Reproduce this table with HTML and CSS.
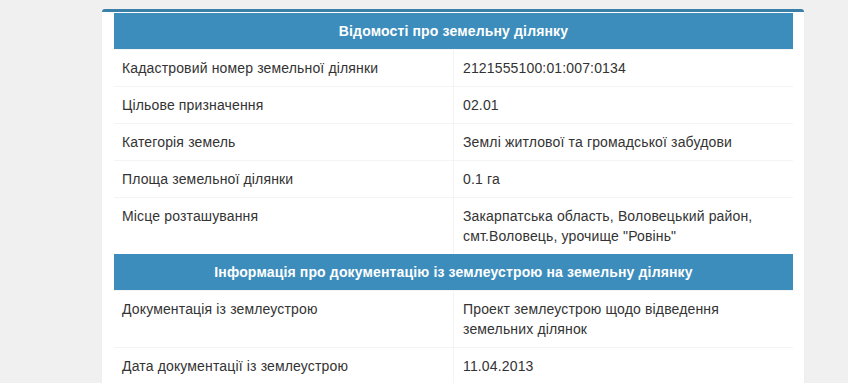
FILE: index.html
```html
<!DOCTYPE html>
<html>
    <head>
        <title>Відомості про земельну ділянку</title>
        <link rel="stylesheet" href="styles.css">
    </head>
    <body>
        <div class="box">
            <table class="info-table">
                <tr>
                    <th colspan="2">Відомості про земельну ділянку</th>
                </tr>
                <tr>
                    <td>Кадастровий номер земельної ділянки</td>
                    <td>2121555100:01:007:0134</td>
                </tr>
                <tr>
                    <td>Цільове призначення</td>
                    <td>02.01</td>
                </tr>
                <tr>
                    <td>Категорія земель</td>
                    <td>Землі житлової та громадської забудови</td>
                </tr>
                <tr>
                    <td>Площа земельної ділянки</td>
                    <td>0.1 га</td>
                </tr>
                <tr>
                    <td>Місце розташування</td>
                    <td>Закарпатська область, Воловецький район, смт.Воловець, урочище "Ровінь"</td>
                </tr>
                <tr>
                    <th colspan="2">Інформація про документацію із землеустрою на земельну ділянку</th>
                </tr>
                <tr>
                    <td>Документація із землеустрою</td>
                    <td>Проект землеустрою щодо відведення земельних ділянок</td>
                </tr>
                <tr>
                    <td>Дата документації із землеустрою</td>
                    <td>11.04.2013</td>
                </tr>
            </table>
        </div>
    </body>
</html>
```

FILE: styles.css
```css
body {
    margin: 0;
    background-color: #f0f0f0;
    font-family: "Liberation Sans", Arial, sans-serif;
    font-size: 14px;
    letter-spacing: 0.15px;
    color: #333;
}

.box {
    margin: 9px 0 0 102px;
    width: 702px;
    background-color: white;
    border-top: 3px solid #3a7fa8;
    border-radius: 3px;
    box-shadow: 0 1px 1px rgba(0, 0, 0, 0.1);
    padding: 1px 11px 10px 12px;
    box-sizing: border-box;
}

.info-table {
    width: 100%;
    border-collapse: collapse;
    table-layout: fixed;
}

.info-table th {
    background-color: #3c8dbc;
    color: white;
    font-weight: bold;
    text-align: center;
    padding: 8px;
    line-height: 20px;
}

.info-table td {
    width: 50%;
    padding: 8px;
    line-height: 20px;
    vertical-align: top;
    border-top: 1px solid #f4f4f4;
}

.info-table td + td {
    border-left: 1px solid #f4f4f4;
    padding-left: 9px;
}
```
